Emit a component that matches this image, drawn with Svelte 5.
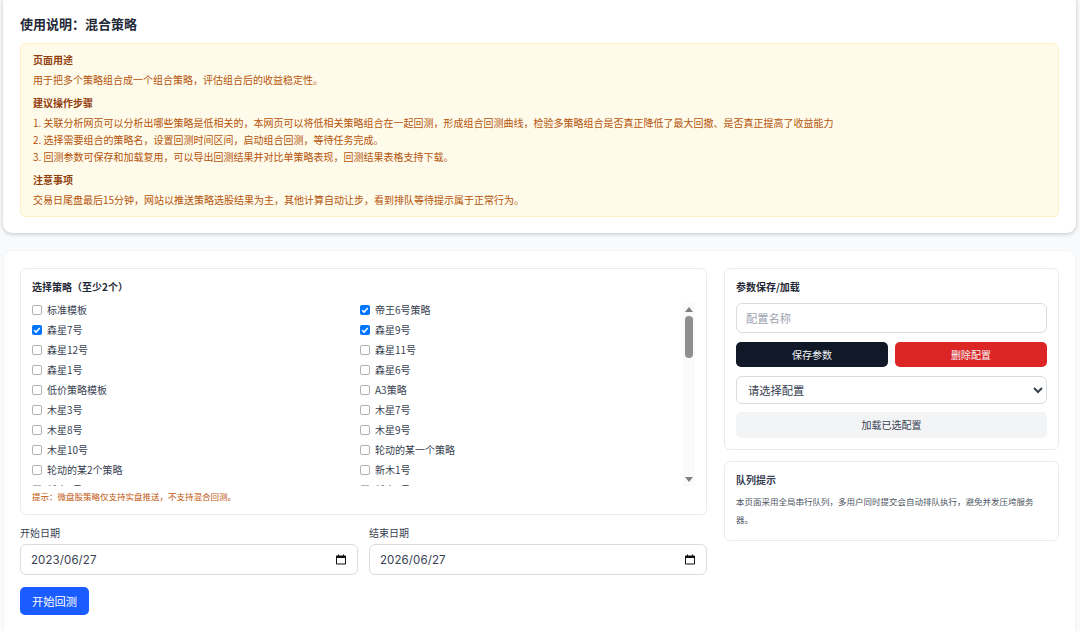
<script>
  const strategies = [
    { name: "标准模板" }, { name: "帝王6号策略", on: true },
    { name: "森星7号", on: true }, { name: "森星9号", on: true },
    { name: "森星12号" }, { name: "森星11号" },
    { name: "森星1号" }, { name: "森星6号" },
    { name: "低价策略模板" }, { name: "A3策略" },
    { name: "木星3号" }, { name: "木星7号" },
    { name: "木星8号" }, { name: "木星9号" },
    { name: "木星10号" }, { name: "轮动的某一个策略" },
    { name: "轮动的某2个策略" }, { name: "新木1号" },
    { name: "新木2号" }, { name: "新木3号" },
  ];
  const dates = [
    { label: "开始日期", value: "2023/06/27" },
    { label: "结束日期", value: "2026/06/27" },
  ];
</script>

<main>
  <section class="card intro">
    <h1>使用说明：混合策略</h1>
    <div class="notice">
      <h2>页面用途</h2>
      <p>用于把多个策略组合成一个组合策略，评估组合后的收益稳定性。</p>
      <h2>建议操作步骤</h2>
      <ol>
        <li>1. 关联分析网页可以分析出哪些策略是低相关的，本网页可以将低相关策略组合在一起回测，形成组合回测曲线，检验多策略组合是否真正降低了最大回撤、是否真正提高了收益能力</li>
        <li>2. 选择需要组合的策略名，设置回测时间区间，启动组合回测，等待任务完成。</li>
        <li>3. 回测参数可保存和加载复用，可以导出回测结果并对比单策略表现，回测结果表格支持下载。</li>
      </ol>
      <h2>注意事项</h2>
      <p>交易日尾盘最后15分钟，网站以推送策略选股结果为主，其他计算自动让步，看到排队等待提示属于正常行为。</p>
    </div>
  </section>

  <section class="card work">
    <div class="left">
      <div class="panel picker">
        <h3>选择策略（至少2个）</h3>
        <div class="scroller">
          <div class="list">
            {#each strategies as s}
              <label class="item">
                <input type="checkbox" checked={s.on} />
                <span>{s.name}</span>
              </label>
            {/each}
          </div>
          <div class="bar">
            <svg width="8" height="5" viewBox="0 0 8 5"><path d="M4 0l4 5H0z" fill="#808080" /></svg>
            <div class="thumb"></div>
            <svg class="down" width="8" height="5" viewBox="0 0 8 5"><path d="M0 0h8L4 5z" fill="#808080" /></svg>
          </div>
        </div>
        <p class="hint">提示：微盘股策略仅支持实盘推送，不支持混合回测。</p>
      </div>

      <div class="dates">
        {#each dates as d}
          <div class="date">
            <div class="date-label">{d.label}</div>
            <div class="date-field">
              <span>{d.value}</span>
              <svg width="10" height="11" viewBox="0 0 10 11">
                <path d="M2 0.5h1v1h4v-1h1v1h1.2a.8.8 0 0 1 .8.8v7.4a.8.8 0 0 1-.8.8H.8a.8.8 0 0 1-.8-.8V2.3a.8.8 0 0 1 .8-.8H2zM1 4v5.5h8V4z" fill="#111" />
              </svg>
            </div>
          </div>
        {/each}
      </div>

      <button class="run">开始回测</button>
    </div>

    <div class="right">
      <div class="panel config">
        <h3>参数保存/加载</h3>
        <input class="name" type="text" placeholder="配置名称" />
        <div class="btns">
          <button class="save">保存参数</button>
          <button class="del">删除配置</button>
        </div>
        <select class="choose">
          <option>请选择配置</option>
        </select>
        <button class="load">加载已选配置</button>
      </div>
      <div class="panel queue">
        <h4>队列提示</h4>
        <p>本页面采用全局串行队列，多用户同时提交会自动排队执行，避免并发压垮服务器。</p>
      </div>
    </div>
  </section>
</main>

<style>
  :global(html), :global(body) {
    margin: 0;
    height: 631px;
    overflow: hidden;
    background: #f9fafb;
  }

  main {
    height: 631px;
    overflow: hidden;
    padding: 0 4px 0 3px;
    font-family: "Noto Sans CJK SC", "Noto Sans", sans-serif;
    color: #1f2937;
  }

  .card {
    background: #fff;
    border-radius: 9px;
    box-sizing: border-box;
  }

  .intro {
    margin-top: -6px;
    padding: 20px 17px 17px;
    height: 239px;
    box-shadow: 0 1px 4px rgba(0, 0, 0, 0.22);
  }

  h1 {
    margin: 0 0 11px;
    height: 18px;
    font-size: 13px;
    line-height: 20px;
    font-weight: 700;
    color: #1f2937;
  }

  .notice {
    box-sizing: border-box;
    height: 174px;
    padding: 7px 12px;
    background: #fffbeb;
    border: 1px solid #fef0c4;
    border-radius: 6px;
    font-size: 10px;
    line-height: 17px;
    color: #b45309;
  }

  h2 {
    margin: 6px 0 3px;
    font-size: 10px;
    font-weight: 700;
    color: #92400e;
  }

  h2:first-child {
    margin-top: 0;
  }

  .notice p, ol {
    margin: 0;
    padding: 0;
    list-style: none;
  }

  .work {
    margin-top: 17px;
    padding: 17px 16px;
    height: 420px;
    border: 1px solid #f3f4f6;
    display: grid;
    grid-template-columns: 687px 335px;
    gap: 17px;
    align-items: start;
  }

  .panel {
    box-sizing: border-box;
    background: #fff;
    border: 1px solid #e9ebee;
    border-radius: 6px;
    padding: 11px;
  }

  .picker {
    height: 247px;
  }

  h3 {
    margin: 0 0 9px;
    font-size: 10px;
    line-height: 14px;
    font-weight: 700;
    color: #1f2937;
  }

  .scroller {
    display: flex;
    height: 183px;
  }

  .list {
    flex: 1;
    overflow: hidden;
    display: grid;
    grid-template-columns: 1fr 1fr;
    column-gap: 5px;
    grid-auto-rows: 20px;
  }

  .bar {
    flex: none;
    width: 12px;
    box-sizing: border-box;
    padding: 4px 0;
    display: flex;
    flex-direction: column;
    align-items: center;
    background: #fafafa;
  }

  .thumb {
    margin-top: 4px;
    width: 7.5px;
    height: 42px;
    border-radius: 4px;
    background: #8f8f8f;
  }

  .down {
    margin-top: auto;
  }

  .item {
    display: flex;
    align-items: flex-start;
    gap: 5.5px;
    height: 14px;
    font-size: 10px;
    line-height: 14px;
    color: #374151;
  }

  .item input {
    appearance: none;
    box-sizing: border-box;
    width: 9.5px;
    height: 9.5px;
    margin: 2px 0 0;
    flex: none;
    background: #fff;
    border: 1px solid #b4b4b4;
    border-radius: 2px;
  }

  .item input:checked {
    border: 0;
    background: #0075ff url("data:image/svg+xml,%3Csvg xmlns='http://www.w3.org/2000/svg' viewBox='0 0 10 10'%3E%3Cpath d='M2.2 5.2l1.9 1.9 3.7-4' fill='none' stroke='white' stroke-width='1.5'/%3E%3C/svg%3E") center / 100% no-repeat;
  }

  .hint {
    margin: 3px 0 0;
    font-size: 8.5px;
    line-height: 14px;
    color: #c2570c;
  }

  .dates {
    margin-top: 11px;
    display: grid;
    grid-template-columns: 1fr 1fr;
    gap: 11px;
  }

  .date-label {
    font-size: 10px;
    line-height: 14px;
    margin-bottom: 4px;
    color: #374151;
  }

  .date-field {
    box-sizing: border-box;
    height: 31px;
    padding: 0 11px 0 10px;
    display: flex;
    align-items: center;
    justify-content: space-between;
    border: 1px solid #d9dce1;
    border-radius: 6px;
    font-family: Inter, sans-serif;
    font-size: 11.5px;
    letter-spacing: 0.1px;
    color: #374151;
  }

  button {
    font-family: inherit;
    border: 0;
    padding: 0 0 1px;
    font-size: 10px;
  }

  .run {
    display: block;
    margin-top: 12px;
    width: 69px;
    height: 28px;
    border-radius: 5px;
    background: #1a5cff;
    color: #fff;
    font-size: 11.25px;
  }

  .config {
    height: 182px;
  }

  .name {
    display: block;
    box-sizing: border-box;
    width: 100%;
    height: 30px;
    padding: 0 9px 1px;
    border: 1px solid #d9dce1;
    border-radius: 6px;
    font-family: inherit;
    font-size: 11.25px;
    outline: none;
  }

  .name::placeholder {
    color: #9ca3af;
  }

  .btns {
    margin-top: 9px;
    display: grid;
    grid-template-columns: 1fr 1fr;
    gap: 7px;
  }

  .btns button {
    height: 25px;
    border-radius: 5px;
    color: #f3f4f6;
  }

  .save {
    background: #111827;
  }

  .del {
    background: #dc2626;
  }

  .choose {
    display: block;
    box-sizing: border-box;
    width: 100%;
    height: 28px;
    margin-top: 9px;
    padding: 0 7px 1px;
    background: #fff;
    border: 1px solid #d9dce1;
    border-radius: 6px;
    font-family: inherit;
    font-size: 11.25px;
    color: #374151;
  }

  .load {
    display: block;
    width: 100%;
    height: 26px;
    margin-top: 8px;
    border-radius: 5px;
    background: #f3f4f6;
    color: #374151;
  }

  .queue {
    margin-top: 11px;
    height: 80px;
  }

  h4 {
    margin: 0;
    font-size: 10px;
    line-height: 14px;
    font-weight: 700;
    color: #374151;
  }

  .queue p {
    margin: 5px 0 0;
    font-size: 8.5px;
    line-height: 18px;
    color: #4b5563;
  }
</style>
